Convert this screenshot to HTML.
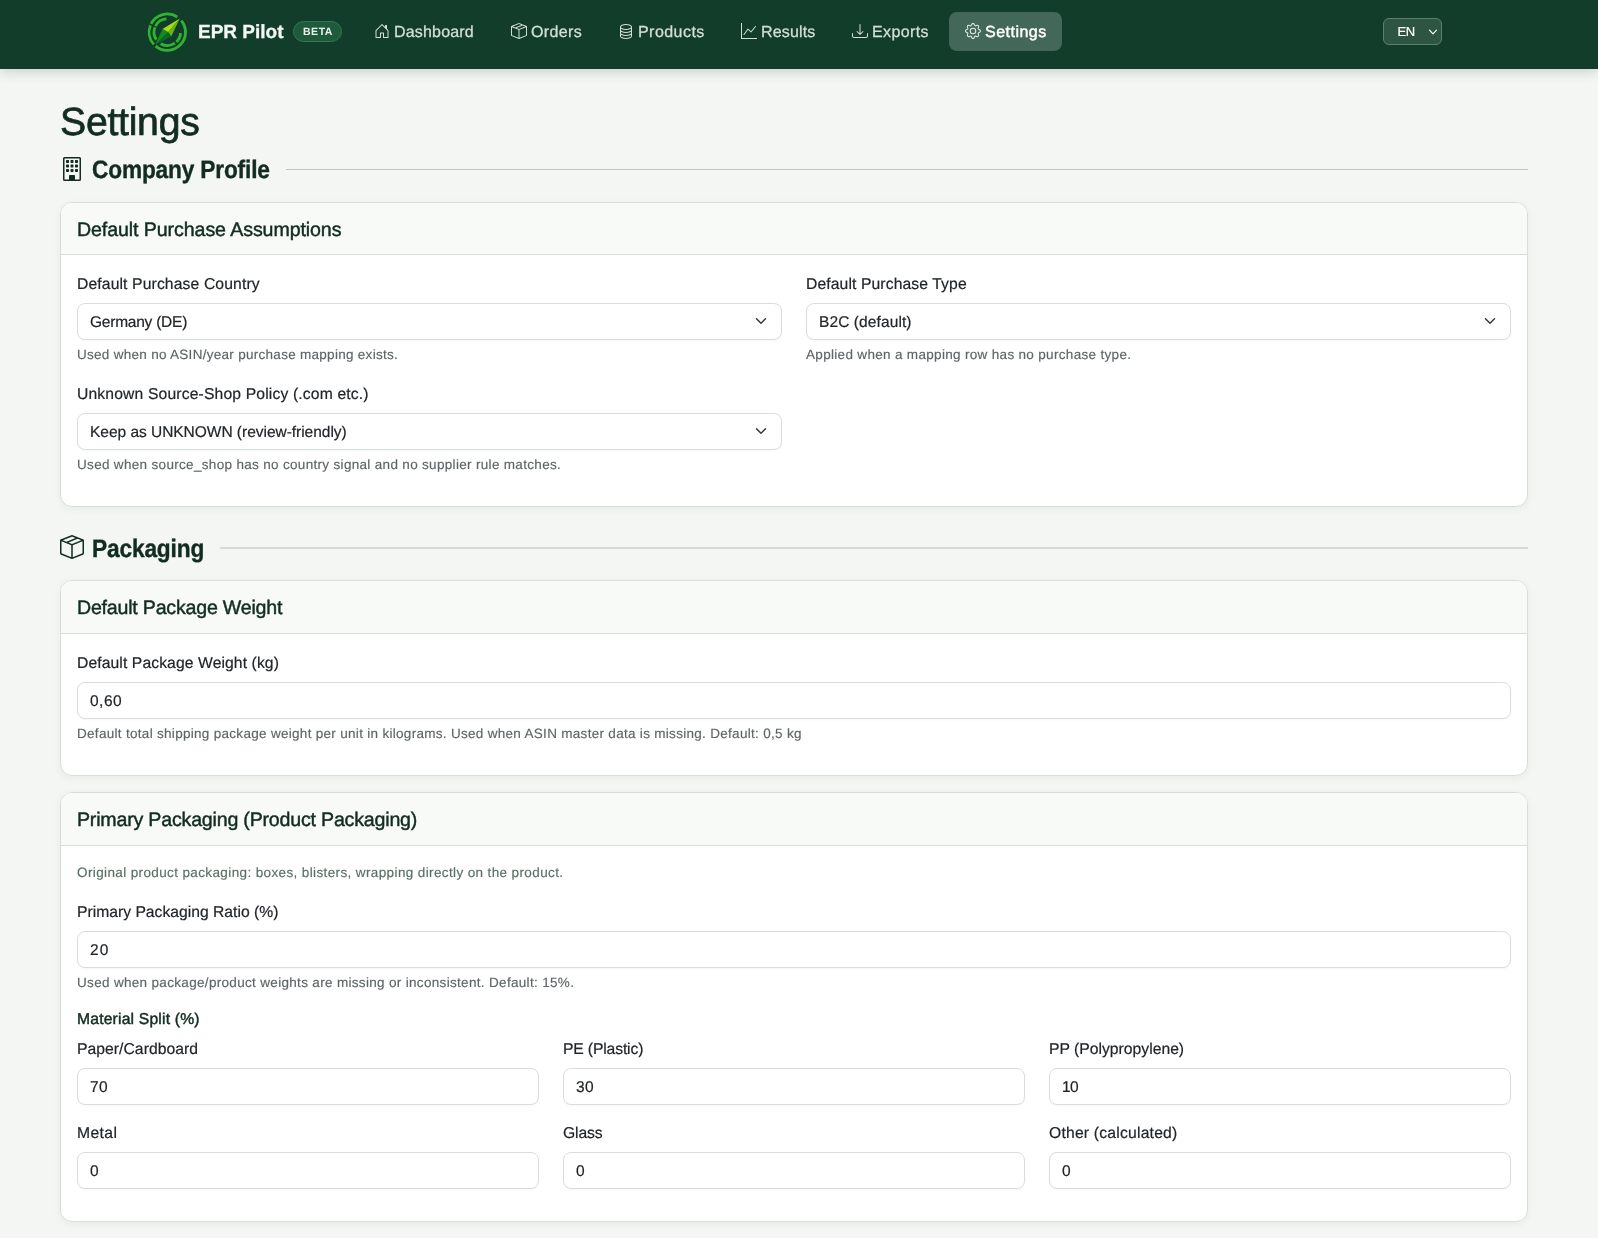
<!DOCTYPE html>
<html lang="en">
<head>
<meta charset="utf-8">
<title>Settings – EPR Pilot</title>
<style>
*{box-sizing:border-box;margin:0;padding:0}
html,body{width:1598px;height:1238px;overflow:hidden}
body{background:#f3f6f3;font-family:"Liberation Sans",Arial,sans-serif;color:#212529;position:relative;font-size:16px;line-height:1.5;text-rendering:geometricPrecision}
#page{position:absolute;left:0;top:0;width:1598px;height:1238px;will-change:transform;transform:translateZ(0)}
.abs{position:absolute;white-space:nowrap}
/* ---------- header ---------- */
#hdr{position:absolute;left:0;top:0;width:1598px;height:69px;background:#133d2b;box-shadow:0 2px 12px rgba(10,40,28,.2)}
#logo{position:absolute;left:147px;top:12px;width:40px;height:40px}
#brand{left:198px;top:18px;font-size:19px;font-weight:700;color:#f4f8f4;line-height:30px;-webkit-text-stroke:.3px #f4f8f4}
#beta{position:absolute;left:293px;top:21px;width:49px;height:21px;border-radius:11px;background:#1f5a3c;border:1px solid #2f7a52;color:#e9f3ec;font-size:10.5px;font-weight:700;letter-spacing:.55px;line-height:20px;text-align:center;padding-left:1px}
.nav{position:absolute;top:13px;height:38px;line-height:38px;color:#d3e0d7;font-size:16px;white-space:nowrap}
.nav svg{position:absolute;top:10px;left:0;width:16px;height:16px;fill:#d3e0d7}
.nav span{position:absolute;left:20px;top:1px;-webkit-text-stroke:.25px #d3e0d7}
#nav-active{position:absolute;left:949px;top:12px;width:113px;height:39px;border-radius:8px;background:#43685a}
#lang{position:absolute;left:1383px;top:18px;width:59px;height:27px;border-radius:6px;background:#2e5442;border:1px solid #5d7f6d;color:#fff;font-size:13px;line-height:26px;-webkit-text-stroke:.2px #fff}
#lang span{position:absolute;left:13.5px;top:0;letter-spacing:-.3px}
#lang svg{position:absolute;left:44px;top:8px;width:10px;height:10px}
/* ---------- content ---------- */
h1{left:60px;top:98.7px;font-size:39.2px;font-weight:400;color:#122c20;line-height:48px;-webkit-text-stroke:.7px #122c20}
.sec{font-size:25.2px;font-weight:700;color:#122c20;line-height:32px;-webkit-text-stroke:.4px #122c20;transform:scaleX(.9);transform-origin:0 50%}
.sec-ico{position:absolute;fill:#122c20}
.rule{position:absolute;height:1px;background:#bcc6c0}
.card{position:absolute;left:60px;width:1468px;background:#fff;border:1px solid #d5ded8;border-radius:12px;box-shadow:0 2px 8px rgba(16,44,32,.05);overflow:hidden}
.card-h{position:absolute;left:0;top:0;width:100%;height:52px;background:#f8faf8;border-bottom:1px solid #d5ded8}
.card-t{font-size:19.6px;color:#122c20;line-height:28px;-webkit-text-stroke:.45px #122c20}
.lbl{font-size:15.7px;color:#212529;line-height:24px;-webkit-text-stroke:.2px #212529}
.hlp{font-size:13.5px;color:#5e6567;line-height:21px;-webkit-text-stroke:.15px currentColor}
.ctl{-webkit-text-stroke:.2px #212529;position:absolute;height:37px;border:1px solid #d8dfda;border-radius:8px;background:#fff;box-shadow:0 1px 2px rgba(16,44,32,.04);font-size:15.5px;color:#212529;line-height:35px;padding:1px 0 0 12px;white-space:nowrap}
.ctl svg{position:absolute;right:14px;top:11px;width:12px;height:12px}
.sub{font-size:15.7px;color:#122c20;line-height:24px;-webkit-text-stroke:.45px #122c20}
/*LS*/
#brand{letter-spacing:-0.002px}
#n1{letter-spacing:0.177px}
#n2{letter-spacing:0.359px}
#n3{letter-spacing:0.451px}
#n4{letter-spacing:0.157px}
#n5{letter-spacing:0.375px}
#n6{letter-spacing:0.484px}
#t-h1{letter-spacing:-0.258px}
#t-s1{letter-spacing:-0.177px}
#t-c1{letter-spacing:-0.087px}
#t-l1{letter-spacing:0.129px}
#t-v1{letter-spacing:-0.237px}
#t-h1a{letter-spacing:0.285px}
#t-l2{letter-spacing:0.109px}
#t-v2{letter-spacing:0.098px}
#t-h2a{letter-spacing:0.32px}
#t-l3{letter-spacing:0.149px}
#t-v3{letter-spacing:-0.026px}
#t-h3a{letter-spacing:0.32px}
#t-s2{letter-spacing:-0.153px}
#t-c2{letter-spacing:-0.212px}
#t-l4{letter-spacing:0.097px}
#t-v4{letter-spacing:0.476px}
#t-h4a{letter-spacing:0.299px}
#t-c3{letter-spacing:-0.197px}
#t-p1{letter-spacing:0.377px}
#t-v5{letter-spacing:1.05px}
#t-h5a{letter-spacing:0.322px}
#t-sub{letter-spacing:0.18px}
#t-m1{letter-spacing:0.046px}
#t-m2{letter-spacing:-0.141px}
#t-m3{letter-spacing:0.013px}
#t-m4{letter-spacing:0.381px}
#t-m5{letter-spacing:-0.152px}
#t-m6{letter-spacing:0.212px}
#t-w1{letter-spacing:0.45px}
#t-w2{letter-spacing:0.45px}
#t-w3{letter-spacing:-0.65px}
/*/LS*/
</style>
</head>
<body>
<div id="page">
<div id="hdr">
 <svg id="logo" viewBox="0 0 40 40">
  <g fill="none" stroke="#2fb42f" stroke-width="2.8">
   <path d="M34.32 8.60 A18.2 18.2 0 0 1 8.60 34.14"/>
   <path d="M6.77 32.38 A18.2 18.2 0 0 1 3.43 13.38"/>
   <path d="M4.08 11.94 A18.2 18.2 0 0 1 30.32 5.01"/>
  </g>
  <g fill="none" stroke="#2fb42f" stroke-width="2.8">
   <path d="M8.45 14.16 A13.3 13.3 0 0 1 19.37 6.93"/>
   <path d="M9.27 27.64 A13.3 13.3 0 0 1 7.97 15.22"/>
   <path d="M27.93 31.09 A13.3 13.3 0 0 1 13.65 31.72"/>
   <path d="M33.57 21.13 A13.3 13.3 0 0 1 29.37 29.93"/>
  </g>
  <polygon points="32.8,6.6 15.5,17.1 21.2,20.2" fill="#a9db14"/>
  <polygon points="32.8,6.6 21.2,20.2 24.2,24.4" fill="#5fbb12"/>
  <polygon points="15.5,17.1 8.0,32.9 21.2,20.2" fill="#138a22"/>
  <polygon points="21.2,20.2 8.0,32.9 24.2,24.4" fill="#0b6a22"/>
 </svg>
 <div id="brand" class="abs">EPR Pilot</div>
 <div id="beta">BETA</div>

 <div id="nav-active"></div>

 <div class="nav" style="left:374px;width:110px">
  <svg viewBox="0 0 16 16"><path d="M8.354 1.146a.5.5 0 0 0-.708 0l-6 6A.5.5 0 0 0 1.500 7.500v7a.5.5 0 0 0 .5.5h4.500a.5.5 0 0 0 .5-.5v-4h2v4a.5.5 0 0 0 .5.5H14a.5.5 0 0 0 .5-.5v-7a.5.5 0 0 0-.146-.354L13 5.793V2.500a.5.5 0 0 0-.5-.5h-1a.5.5 0 0 0-.5.5v1.293zM2.500 14V7.707l5.500-5.500 5.500 5.500V14H10v-4a.5.5 0 0 0-.5-.5h-3a.5.5 0 0 0-.5.5v4z"/></svg>
  <span id="n1">Dashboard</span>
 </div>
 <div class="nav" style="left:511px;width:80px">
  <svg viewBox="0 0 16 16"><path d="M8.186 1.113a.5.5 0 0 0-.372 0L1.846 3.500l2.404.961L10.404 2zm3.564 1.426L5.596 5 8 5.961 14.154 3.500zm3.250 1.700-6.500 2.600v7.922l6.500-2.600V4.240zM7.500 14.762V6.838L1 4.239v7.923zM7.443.184a1.500 1.500 0 0 1 1.114 0l7.129 2.852A.5.5 0 0 1 16 3.500v8.662a1 1 0 0 1-.629.928l-7.185 2.874a.5.5 0 0 1-.372 0L.630 13.090a1 1 0 0 1-.630-.928V3.500a.5.5 0 0 1 .314-.464z"/></svg>
  <span id="n2">Orders</span>
 </div>
 <div class="nav" style="left:618px;width:90px">
  <svg viewBox="0 0 16 16"><path d="M4.318 2.687C5.234 2.271 6.536 2 8 2s2.766.270 3.682.687C12.644 3.125 13 3.627 13 4c0 .374-.356.875-1.318 1.313C10.766 5.729 9.464 6 8 6s-2.766-.270-3.682-.687C3.356 4.875 3 4.373 3 4c0-.374.356-.875 1.318-1.313M13 5.698V7c0 .374-.356.875-1.318 1.313C10.766 8.729 9.464 9 8 9s-2.766-.270-3.682-.687C3.356 7.875 3 7.373 3 7V5.698c.271.202.580.378.904.525C4.978 6.711 6.427 7 8 7s3.022-.289 4.096-.777A5 5 0 0 0 13 5.698M14 4c0-1.007-.875-1.755-1.904-2.223C11.022 1.289 9.573 1 8 1s-3.022.289-4.096.777C2.875 2.245 2 2.993 2 4v9c0 1.007.875 1.755 1.904 2.223C4.978 15.710 6.427 16 8 16s3.022-.289 4.096-.777C13.125 14.755 14 14.007 14 13zm-1 4.698V10c0 .374-.356.875-1.318 1.313C10.766 11.729 9.464 12 8 12s-2.766-.270-3.682-.687C3.356 10.875 3 10.373 3 10V8.698c.271.202.580.378.904.525C4.978 9.710 6.427 10 8 10s3.022-.289 4.096-.777A5 5 0 0 0 13 8.698m0 3V13c0 .374-.356.875-1.318 1.313C10.766 14.729 9.464 15 8 15s-2.766-.270-3.682-.687C3.356 13.875 3 13.373 3 13v-1.302c.271.202.580.378.904.525C4.978 12.710 6.427 13 8 13s3.022-.289 4.096-.777c.324-.147.633-.323.904-.525"/></svg>
  <span id="n3">Products</span>
 </div>
 <div class="nav" style="left:741px;width:80px">
  <svg viewBox="0 0 16 16"><path fill-rule="evenodd" d="M0 0h1v15h15v1H0zm14.817 3.113a.5.5 0 0 1 .070.704l-4.500 5.500a.5.5 0 0 1-.740.037L7.060 6.767l-3.656 5.027a.5.5 0 0 1-.808-.588l4-5.500a.5.5 0 0 1 .758-.060l2.609 2.610 4.150-5.073a.5.5 0 0 1 .704-.070"/></svg>
  <span id="n4">Results</span>
 </div>
 <div class="nav" style="left:852px;width:80px">
  <svg viewBox="0 0 16 16"><path d="M.5 9.900a.5.5 0 0 1 .5.5v2.500a1 1 0 0 0 1 1h12a1 1 0 0 0 1-1v-2.500a.5.5 0 0 1 1 0v2.500a2 2 0 0 1-2 2H2a2 2 0 0 1-2-2v-2.500a.5.5 0 0 1 .5-.5"/><path d="M7.646 11.854a.5.5 0 0 0 .708 0l3-3a.5.5 0 0 0-.708-.708L8.500 10.293V1.500a.5.5 0 0 0-1 0v8.793L5.354 8.146a.5.5 0 1 0-.708.708z"/></svg>
  <span id="n5">Exports</span>
 </div>
 <div class="nav" style="left:965px;width:90px;color:#fff">
  <svg viewBox="0 0 16 16" style="fill:#e4ece7"><path d="M8 4.754a3.246 3.246 0 1 0 0 6.492 3.246 3.246 0 0 0 0-6.492M5.754 8a2.246 2.246 0 1 1 4.492 0 2.246 2.246 0 0 1-4.492 0"/><path d="M9.796 1.343c-.527-1.790-3.065-1.790-3.592 0l-.094.319a.873.873 0 0 1-1.255.520l-.292-.160c-1.640-.892-3.433.902-2.540 2.541l.159.292a.873.873 0 0 1-.520 1.255l-.319.094c-1.790.527-1.790 3.065 0 3.592l.319.094a.873.873 0 0 1 .520 1.255l-.160.292c-.892 1.640.901 3.434 2.541 2.540l.292-.159a.873.873 0 0 1 1.255.520l.094.319c.527 1.790 3.065 1.790 3.592 0l.094-.319a.873.873 0 0 1 1.255-.520l.292.160c1.640.893 3.434-.902 2.540-2.541l-.159-.292a.873.873 0 0 1 .520-1.255l.319-.094c1.790-.527 1.790-3.065 0-3.592l-.319-.094a.873.873 0 0 1-.520-1.255l.160-.292c.893-1.640-.902-3.433-2.541-2.540l-.292.159a.873.873 0 0 1-1.255-.520zm-2.633.283c.246-.835 1.428-.835 1.674 0l.094.319a1.873 1.873 0 0 0 2.693 1.115l.291-.160c.764-.415 1.600.420 1.184 1.185l-.159.292a1.873 1.873 0 0 0 1.116 2.692l.318.094c.835.246.835 1.428 0 1.674l-.319.094a1.873 1.873 0 0 0-1.115 2.693l.160.291c.415.764-.420 1.600-1.185 1.184l-.291-.159a1.873 1.873 0 0 0-2.693 1.116l-.094.318c-.246.835-1.428.835-1.674 0l-.094-.319a1.873 1.873 0 0 0-2.692-1.115l-.292.160c-.764.415-1.600-.420-1.184-1.185l.159-.291A1.873 1.873 0 0 0 1.945 8.930l-.319-.094c-.835-.246-.835-1.428 0-1.674l.319-.094A1.873 1.873 0 0 0 3.060 4.377l-.160-.292c-.415-.764.420-1.600 1.185-1.184l.292.159a1.873 1.873 0 0 0 2.692-1.115z"/></svg>
  <span id="n6" style="font-weight:400;-webkit-text-stroke:.45px #fff">Settings</span>
 </div>

 <div id="lang"><span>EN</span><svg viewBox="0 0 10 10"><path d="M1.500 3.200 5 6.800 8.500 3.200" fill="none" stroke="#fff" stroke-width="1.200" stroke-linecap="round" stroke-linejoin="round"/></svg></div>
</div>

<h1 class="abs" id="t-h1">Settings</h1>

<!-- Section: Company Profile -->
<svg class="sec-ico" style="left:60px;top:157px;width:24px;height:24px" viewBox="0 0 16 16"><path d="M4 2.500a.5.5 0 0 1 .5-.5h1a.5.5 0 0 1 .5.5v1a.5.5 0 0 1-.5.5h-1a.5.5 0 0 1-.5-.5zm3 0a.5.5 0 0 1 .5-.5h1a.5.5 0 0 1 .5.5v1a.5.5 0 0 1-.5.5h-1a.5.5 0 0 1-.5-.5zm3.500-.5a.5.5 0 0 0-.5.5v1a.5.5 0 0 0 .5.5h1a.5.5 0 0 0 .5-.5v-1a.5.5 0 0 0-.5-.5zM4 5.500a.5.5 0 0 1 .5-.5h1a.5.5 0 0 1 .5.5v1a.5.5 0 0 1-.5.5h-1a.5.5 0 0 1-.5-.5zM7.500 5a.5.5 0 0 0-.5.5v1a.5.5 0 0 0 .5.5h1a.5.5 0 0 0 .5-.5v-1a.5.5 0 0 0-.5-.5zm2.500.5a.5.5 0 0 1 .5-.5h1a.5.5 0 0 1 .5.5v1a.5.5 0 0 1-.5.5h-1a.5.5 0 0 1-.5-.5zM4.500 8a.5.5 0 0 0-.5.5v1a.5.5 0 0 0 .5.5h1a.5.5 0 0 0 .5-.5v-1a.5.5 0 0 0-.5-.5zm2.500.5a.5.5 0 0 1 .5-.5h1a.5.5 0 0 1 .5.5v1a.5.5 0 0 1-.5.5h-1a.5.5 0 0 1-.5-.5zm3.500-.5a.5.5 0 0 0-.5.5v1a.5.5 0 0 0 .5.5h1a.5.5 0 0 0 .5-.5v-1a.5.5 0 0 0-.5-.5z"/><path d="M2 1a1 1 0 0 1 1-1h10a1 1 0 0 1 1 1v14a1 1 0 0 1-1 1H3a1 1 0 0 1-1-1zm11 0H3v14h3v-2.500a.5.5 0 0 1 .5-.5h3a.5.5 0 0 1 .5.5V15h3z"/></svg>
<div class="abs sec" id="t-s1" style="left:92px;top:154px">Company Profile</div>
<div class="rule" style="left:286px;top:169px;width:1242px"></div>

<!-- Card 1 -->
<div class="card" style="top:202px;height:305px"><div class="card-h" style="height:52px"></div></div>
<div class="abs card-t" id="t-c1" style="left:77px;top:216px">Default Purchase Assumptions</div>

<div class="abs lbl" id="t-l1" style="left:77px;top:273px">Default Purchase Country</div>
<div class="ctl" style="left:77px;top:303px;width:705px"><span id="t-v1">Germany (DE)</span><svg viewBox="0 0 16 16"><path fill="none" stroke="#343a40" stroke-linecap="round" stroke-linejoin="round" stroke-width="2" d="m2 5 6 6 6-6"/></svg></div>
<div class="abs hlp" id="t-h1a" style="left:77px;top:344px">Used when no ASIN/year purchase mapping exists.</div>

<div class="abs lbl" id="t-l2" style="left:806px;top:273px">Default Purchase Type</div>
<div class="ctl" style="left:806px;top:303px;width:705px"><span id="t-v2">B2C (default)</span><svg viewBox="0 0 16 16"><path fill="none" stroke="#343a40" stroke-linecap="round" stroke-linejoin="round" stroke-width="2" d="m2 5 6 6 6-6"/></svg></div>
<div class="abs hlp" id="t-h2a" style="left:806px;top:344px">Applied when a mapping row has no purchase type.</div>

<div class="abs lbl" id="t-l3" style="left:77px;top:383px">Unknown Source-Shop Policy (.com etc.)</div>
<div class="ctl" style="left:77px;top:413px;width:705px"><span id="t-v3">Keep as UNKNOWN (review-friendly)</span><svg viewBox="0 0 16 16"><path fill="none" stroke="#343a40" stroke-linecap="round" stroke-linejoin="round" stroke-width="2" d="m2 5 6 6 6-6"/></svg></div>
<div class="abs hlp" id="t-h3a" style="left:77px;top:454px">Used when source_shop has no country signal and no supplier rule matches.</div>

<!-- Section: Packaging -->
<svg class="sec-ico" style="left:60px;top:535.3px;width:24px;height:24px" viewBox="0 0 16 16"><path d="M8.186 1.113a.5.5 0 0 0-.372 0L1.846 3.500l2.404.961L10.404 2zm3.564 1.426L5.596 5 8 5.961 14.154 3.500zm3.250 1.700-6.500 2.600v7.922l6.500-2.600V4.240zM7.500 14.762V6.838L1 4.239v7.923zM7.443.184a1.500 1.500 0 0 1 1.114 0l7.129 2.852A.5.5 0 0 1 16 3.500v8.662a1 1 0 0 1-.629.928l-7.185 2.874a.5.5 0 0 1-.372 0L.630 13.090a1 1 0 0 1-.630-.928V3.500a.5.5 0 0 1 .314-.464z"/></svg>
<div class="abs sec" id="t-s2" style="left:92px;top:533px">Packaging</div>
<div class="rule" style="left:220px;top:547px;width:1308px;height:2px;background:#d5dbd7"></div>

<!-- Card 2 -->
<div class="card" style="top:580px;height:196px"><div class="card-h" style="height:53px"></div></div>
<div class="abs card-t" id="t-c2" style="left:77px;top:594px">Default Package Weight</div>
<div class="abs lbl" id="t-l4" style="left:77px;top:652px">Default Package Weight (kg)</div>
<div class="ctl" style="left:77px;top:682px;width:1434px"><span id="t-v4">0,60</span></div>
<div class="abs hlp" id="t-h4a" style="left:77px;top:723px">Default total shipping package weight per unit in kilograms. Used when ASIN master data is missing. Default: 0,5 kg</div>

<!-- Card 3 -->
<div class="card" style="top:792px;height:430px"><div class="card-h" style="height:53px"></div></div>
<div class="abs card-t" id="t-c3" style="left:77px;top:806px">Primary Packaging (Product Packaging)</div>
<div class="abs hlp" id="t-p1" style="left:77px;top:862px;color:#587064">Original product packaging: boxes, blisters, wrapping directly on the product.</div>
<div class="abs lbl" id="t-l5" style="left:77px;top:901px">Primary Packaging Ratio (%)</div>
<div class="ctl" style="left:77px;top:931px;width:1434px"><span id="t-v5">20</span></div>
<div class="abs hlp" id="t-h5a" style="left:77px;top:972px">Used when package/product weights are missing or inconsistent. Default: 15%.</div>
<div class="abs sub" id="t-sub" style="left:77px;top:1008px">Material Split (%)</div>

<div class="abs lbl" id="t-m1" style="left:77px;top:1038px">Paper/Cardboard</div>
<div class="ctl" style="left:77px;top:1068px;width:462px"><span id="t-w1">70</span></div>
<div class="abs lbl" id="t-m2" style="left:563px;top:1038px">PE (Plastic)</div>
<div class="ctl" style="left:563px;top:1068px;width:462px"><span id="t-w2">30</span></div>
<div class="abs lbl" id="t-m3" style="left:1049px;top:1038px">PP (Polypropylene)</div>
<div class="ctl" style="left:1049px;top:1068px;width:462px"><span id="t-w3">10</span></div>

<div class="abs lbl" id="t-m4" style="left:77px;top:1122px">Metal</div>
<div class="ctl" style="left:77px;top:1152px;width:462px"><span id="t-w4">0</span></div>
<div class="abs lbl" id="t-m5" style="left:563px;top:1122px">Glass</div>
<div class="ctl" style="left:563px;top:1152px;width:462px"><span id="t-w5">0</span></div>
<div class="abs lbl" id="t-m6" style="left:1049px;top:1122px">Other (calculated)</div>
<div class="ctl" style="left:1049px;top:1152px;width:462px"><span id="t-w6">0</span></div>

</div>
</body>
</html>
